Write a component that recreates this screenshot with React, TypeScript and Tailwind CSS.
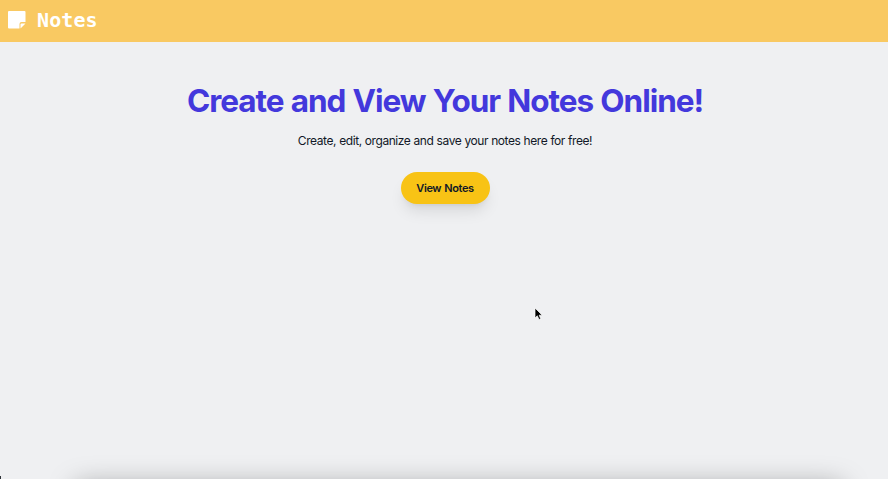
export default function App() {
  return (
    <div className="relative flex h-[479px] w-[888px] flex-col overflow-hidden bg-[#eff0f2] font-['Inter',sans-serif]">
      <header className="flex h-[42px] shrink-0 items-center gap-[11px] bg-[#f9c962] pl-2 text-white">
        <svg width="18" height="18" viewBox="0 0 18 18" fill="currentColor" className="-mt-0.5">
          <path d="M1 0h15.500A1 1 0 0 1 17.500 1V11h-4A2 2 0 0 0 11.500 13v4.500H1A1 1 0 0 1 0 16.500V1A1 1 0 0 1 1 0Z" />
          <path d="M13.500 12.500h4l-5 5v-4a1 1 0 0 1 1-1Z" />
        </svg>
        <span className="-mt-[2px] font-['DejaVu_Sans_Mono',monospace] text-[20px] leading-none font-bold tracking-[0.1px]">Notes</span>
      </header>
      <main className="flex flex-col items-center pl-[2px]">
        <h1 className="mt-[41px] text-[31.5px] leading-9 font-bold tracking-[-1.03px] [word-spacing:0.8px] whitespace-nowrap text-[#4338dc]">Create and View Your Notes Online!</h1>
        <p className="mt-[12px] text-[12px] leading-[20px] tracking-[-0.43px] [word-spacing:0.2px] whitespace-nowrap text-[#111827]">Create, edit, organize and save your notes here for free!</p>
        <button className="mt-[21px] h-8 w-[89px] rounded-full bg-[#f8c315] text-[11px] font-semibold tracking-[-0.4px] [word-spacing:0.7px] whitespace-nowrap text-[#111827] shadow-lg">View Notes</button>
      </main>
      <svg className="absolute top-[307px] left-[534px]" width="9" height="14" viewBox="0 0 9 14">
        <path d="M1 1v10l2.300-2.200L5 12.500l1.700-.8L5.200 8.200h3Z" fill="#000" stroke="#fff" strokeWidth="0.7" />
      </svg>
      <div className="absolute top-[488px] left-[78px] h-10 w-[762px] shadow-[0_0_28px_2px_rgba(0,0,0,0.36)]" />
      <div className="absolute bottom-0 left-0 h-[3px] w-px bg-[#30343a]" />
    </div>
  );
}
